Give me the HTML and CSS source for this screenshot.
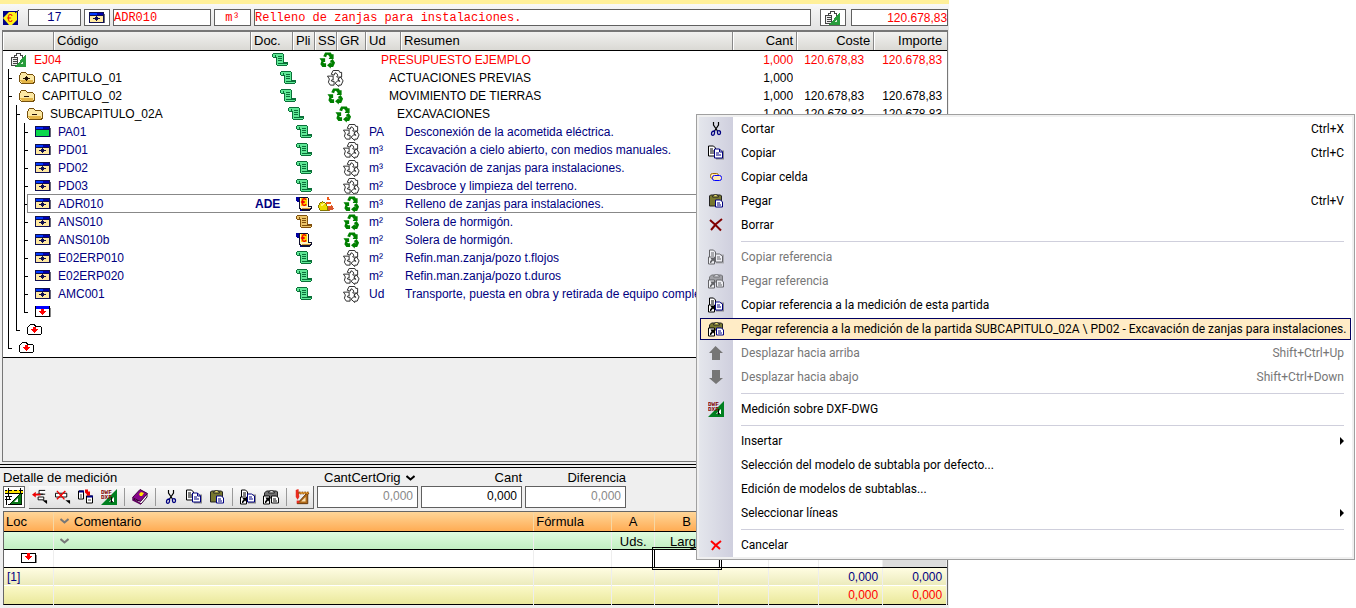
FILE: index.html
```html
<!DOCTYPE html>
<html lang="es">
<head>
<meta charset="utf-8">
<title>Presupuesto ejemplo</title>
<link rel="stylesheet" href="styles.css">
</head>
<body>
<svg class="sprite" aria-hidden="true">
  <symbol id="win" viewBox="0 0 16 12"><path fill="#667" d="M2 11h14V2h-1v9z"/><path fill="#101050" d="M0 0h15v11H0z"/><path fill="#0038ff" d="M1 1h9v2H1z"/><path fill="#0000b0" d="M8 1h6v2H8z"/><path fill="#ffe9a0" d="M1 4h13v6H1z"/><path fill="#101050" d="M7 4h1v1h1v1h2v1H9v1H8v1H7V8H6V7H4V6h2V5h1z"/></symbol>
  <symbol id="wing" viewBox="0 0 16 12"><path fill="#667" d="M2 11h14V2h-1v9z"/><path fill="#101050" d="M0 0h15v11H0z"/><path fill="#0028ff" d="M1 1h9v2H1z"/><path fill="#0000b0" d="M8 1h6v2H8z"/><path fill="#0bd84c" d="M1 4h13v6H1z"/></symbol>
  <symbol id="winr" viewBox="0 0 16 12"><path fill="#888" d="M2 11h14V2h-1v9z"/><path d="M0 0h15v11H0z"/><path fill="#00f" d="M1 0h13v3H1z"/><path fill="#fff" d="M1 3h13v7H1z"/><path fill="red" d="M6 3h3v2h2v1h-1v1H9v1H8v1H7V8H6V7H5V6H4V5h2z"/></symbol>
  <symbol id="boxr" viewBox="0 0 16 12"><path fill="#888" d="M2 10h14V2h-1v8z"/><path d="M0 0h15v10H0z"/><path fill="#fff" d="M1 1h13v8H1z"/><path fill="red" d="M6 0h3v3h2v1h-1v1H9v1H8v1H7V6H6V5H5V4H4V3h2z"/></symbol>
  <symbol id="folp" viewBox="0 0 16 12"><path fill="#fce9a4" stroke="#76500c" d="M.5 3.500l2-3h4l2 2h5l2 2v5l-1 2H2.500l-2-2z"/><path fill="#e4b648" d="M1 8h13v3H3z"/><path fill="#201004" d="M7 4h1v1h1v1h2v1H9v1H8v1H7V8H6V7H4V6h2V5h1z"/></symbol>
  <symbol id="folm" viewBox="0 0 16 12"><path fill="#fce9a4" stroke="#76500c" d="M.5 3.500l2-3h4l2 2h5l2 2v5l-1 2H2.500l-2-2z"/><path fill="#e4b648" d="M1 8h13v3H3z"/><path fill="#201004" d="M5 6h5v1H5z"/></symbol>
  <symbol id="folr" viewBox="0 0 16 12"><path fill="#fff" stroke="#000" d="M.5 3.500l2-2 1-1h4l1 2h5l1 1v6l-1 1h-12l-1-1z"/><path fill="red" d="M6 3h3v2h2v1h-1v1H9v1H8v1H7V8H6V7H5V6H4V5h2z"/></symbol>
  <symbol id="scroll" viewBox="0 0 16 14"><path fill="currentColor" stroke="var(--edge)" d="M1.500.5h9l1 1v8h4v2l-1 1h-9l-1.500-1.500V4.500H1.500l-1-1v-2z"/><path fill="none" stroke="var(--edge)" d="M3.500 4V2M6 3.500h4M6 5.500h4M6 7.500h4M6 10.500h9"/></symbol>
  <symbol id="scrolle" viewBox="0 0 16 14"><path fill="#0000a0" d="M0 0h4v5H1L0 4zM4 9h2v5H4z"/><path fill="#fff4c0" stroke="#101030" d="M3.500.500h8l1 1v8h2.500v2l-1 1h-9l-1.500-1.500z"/><path fill="#101030" d="M6 13h8v1H6z"/><path fill="#ffd800" d="M5 1h6v8H5z"/><text class="euro" x="5" y="9" font-size="10">€</text><path fill="#d49a38" d="M6 11h8v1H6z"/></symbol>
  <symbol id="rec" viewBox="-.5 -.5 18 18"><path d="M4 4l2-4h6l1 2h2v5h-5V6l1-1-1.500-2L8 2.500 7 5zM0 6h6v4H4.500L4 11l1 .5h2v4H3L1 12.500 2 9zM11 9l3-2 2.500 4-2 4.500H12V17l-4-3.500L12 10v1.500h1z"/></symbol>
  <symbol id="helmet" viewBox="0 0 16 14"><path fill="#f25a18" d="M9 0h2l3 10-6 1z"/><path fill="#fff" d="M8 3h4v2H8zm0 4h5v2H8z"/><path fill="#d8542c" d="M8 11l7-2 1 3-5 2z"/><path fill="#ecdc00" stroke="#847600" d="M1 11c-1-6 5-9 8-2l1 4H2z"/><path fill="#fff37a" d="M3 7l4-1-3 4z"/></symbol>
  <symbol id="calc" viewBox="0 0 16 14"><path fill="#fff" stroke="#444" d="M3.500 2.500h2v-2h4v2h2v8h-8z"/><path fill="#eee" stroke="#444" d="M.5 4.500h6v8h-6z"/><path stroke="#444" d="M2 6.500h4M2 8.500h4M2 10.500h4"/><path fill="#289c3c" d="M15 1v13H4z"/><path fill="#d6f0d6" d="M12 8v3H9z"/></symbol>
  <symbol id="cut" viewBox="0 0 16 16"><path fill="none" stroke="#000" stroke-width="1.200" d="M5.500 1v3l4 6M10.500 1v3l-4 6"/><path fill="none" stroke="#000080" stroke-width="1.300" d="M6.500 10c-3 0-3 2-3 3 0 2 3 2 3-1zm3 0c3-1 3 1 3 2 0 2-3 2-3 0z"/></symbol>
  <symbol id="copy" viewBox="0 0 16 15"><path fill="#888" d="M8 5h8v9H8z"/><path fill="#fff" stroke="#000" d="M.5.5h5l2 2v8h-7z"/><path stroke="#000" d="M2 3.500h3M2 5.500h4M2 7.500h4"/><path fill="#fff" stroke="#000080" d="M6.500 3.500h5l3 3v6h-8z"/><path fill="none" stroke="#000080" d="M11.500 3.500v3h3M8 7.500h3M8 9.500h5"/></symbol>
  <symbol id="cell" viewBox="0 0 16 16"><rect x="2.500" y="4.500" width="8" height="5" rx="2" fill="#ffe9b8" stroke="#a06800"/><rect x="4.500" y="6.500" width="9" height="5" rx="2" fill="#ffe9b8" stroke="#00f"/></symbol>
  <symbol id="paste" viewBox="0 0 16 15"><path fill="#77772f" stroke="#222" d="M1.500 2.500l1-1h10l1 1v10h-12z"/><path fill="#eee36b" stroke="#222" d="M4.500 3.500l1-2h1l1-1 1 1h1l1 2z"/><path fill="#fff" stroke="#000080" d="M7.500 6.500h5l2 2v5h-7z"/><path stroke="#000080" d="M9 9.500h3M9 11.500h4"/></symbol>
  <symbol id="rcopy" viewBox="0 0 16 15"><path fill="#888" d="M8 5h8v9H8z"/><path fill="#fff" stroke="#000" d="M1.500.5h4l2 2v8h-6z"/><path stroke="#000" d="M3 3.500h3M3 5.500h3"/><path fill="#fff" stroke="#000080" d="M7.500 4.500h4l3 2v6h-7z"/><path stroke="#000080" d="M9 7.500h3M9 9.500h4"/><path fill="#fff" stroke="#000" d="M.5 7.500h6v7h-6z"/><path d="M2.500 8.500H6V12l-1-1-2 2.500H2V12l1.500-2z"/></symbol>
  <symbol id="rpaste" viewBox="0 0 16 15"><path fill="#77772f" stroke="#222" d="M1.500 3.500l2-2h10l1 1v6h-13z"/><path fill="#eee36b" stroke="#222" d="M5.500 3.500l1-2h1l1-1 1 1h1l1 2z"/><path fill="#fff" stroke="#000080" d="M8.500 6.500h5l2 2v5h-7z"/><path stroke="#000080" d="M10 9.500h3M10 11.500h4"/><path fill="#fff" stroke="#000" d="M.5 6.500h6v8h-6z"/><path d="M2.500 8H6v4l-1-1-2 2.500H2V12l1.500-2z"/></symbol>
  <symbol id="del" viewBox="0 0 16 16"><path fill="none" stroke="#800000" stroke-width="2" d="M2 3l5 4.500 6 6M14 2 8 7l-5 6"/></symbol>
  <symbol id="cancel" viewBox="0 0 16 16"><path fill="none" stroke="#f00" stroke-width="2" d="M3 4l9 8M13 4 8 8l-4 5"/></symbol>
  <symbol id="up" viewBox="0 0 16 16"><path fill="#767676" d="M7.500 1 15 8h-3v7H4V8H1z"/></symbol>
  <symbol id="down" viewBox="0 0 16 16"><path fill="#767676" d="M8 15l7-6h-3V1H4v8H1z"/></symbol>
  <symbol id="dxf" viewBox="0 0 16 16"><path fill="#008020" d="M16 0v16H0z"/><path fill="#fff" d="M13 8v5H8z"/><path fill="#000" d="M10 8h1v4h1l-1 2-2-2h1z"/><text class="dxf" x="0" y="5" font-size="6">DWF</text><text class="dxf" x="0" y="10" font-size="6">DXF</text></symbol>
  <symbol id="measure" viewBox="0 0 18 18"><path fill="#087818" stroke="#002800" d="M16.500 4.500v12H4.500z"/><path fill="#fff" d="M13 10v4H9z"/><path fill="#ffe400" d="M0 2h18v3H0z"/><path stroke="#000" d="M0 5.500h18M0 2.500h2M4 2.500h3M9 2.500h3M14 2.500h4M3.500 0v9M15.500 0v6M0 8.500h7M0 11.500h6M1.500 9v8M4.500 9v3M3 16.500h14"/></symbol>
  <symbol id="tri" viewBox="0 0 18 18"><path fill="#b06a18" stroke="#5a2c00" d="M15.500 3.500v13H3.500z"/><path fill="#fce0b0" d="M13 9v5H8z"/><path fill="#e82c20" d="M2 1l3-1 1 9-2 3-2-3z"/><path fill="#e82c20" d="M3 13h3v3H3z"/><path fill="#f4ac30" stroke="#803800" stroke-dasharray="2 1" d="M5.500 3.500h11v2h-11z"/></symbol>
  <symbol id="ins" viewBox="0 0 17 15"><path fill="#fff" stroke="#000" d="M14 .500H7.500v4H14M12.500 7.500h-6v3h6zM5 4.500h7"/><path fill="#e00" d="M0 5l4-3v2h5v2H4v2z"/><path d="M11 11h5v4z"/></symbol>
  <symbol id="delrow" viewBox="0 0 17 15"><path fill="#fff" stroke="#000" d="M.5 3.500h12v4H.500z"/><path fill="none" stroke="#e00" stroke-width="1.500" d="M2 1l8 9M11 1 2 10"/><path d="M11 11h5v4z"/></symbol>
  <symbol id="move" viewBox="0 0 16 15"><path fill="#fff" stroke="#000" d="M.5 1.500h5v8h-5zM8.500 6.500h6v7h-6z"/><path fill="#000080" d="M1 1h5v2H1zm8 5h6v2H9z"/><path stroke="#444" d="M2 5.500h2M2 7.500h2M10 10.500h3"/><path fill="#e00" d="M7 0h3v2h2V1v5H8l1-1-2-2z"/></symbol>
  <symbol id="book" viewBox="0 0 16 16"><path fill="#fff" stroke="#300030" d="M1 10l8 5 6-7v-3L7 12z"/><path fill="#87068a" stroke="#400040" d="M.500 8.500 8 .500l7.500 4-7 8z"/><path fill="#ffe400" d="M7 5l2-2 3 1-2 3H8z"/><path fill="none" stroke="#600060" stroke-width="1.500" d="M1 9v2l8 4"/></symbol>
  <symbol id="tag" viewBox="0 0 16 16"><path fill="#000088" d="M0 1h15v14H0z"/><path fill="#fff21a" d="M0 8 6 2h8v8l-5 5H6z"/><path stroke="#222" d="M12 3l4-3"/><text class="euro thin" x="4" y="12" font-size="10">€</text></symbol>
  <symbol id="chev" viewBox="0 0 9 6"><path fill="none" stroke="currentColor" stroke-width="2" d="M.500 1l4 3.500 4-3.500"/></symbol>
</svg>

<main class="app">
  <header class="record">
    <svg class="tag"><use href="#tag"/></svg>
    <input class="mono nav" aria-label="Fila" value="17">
    <button class="box" aria-label="Tipo"><svg class="i12"><use href="#win"/></svg></button>
    <input class="mono code" aria-label="Código" value="ADR010">
    <input class="mono unit" aria-label="Unidad" value="m³">
    <input class="mono grow" aria-label="Resumen" value="Relleno de zanjas para instalaciones.">
    <button class="box calc" aria-label="Calcular"><svg class="i14"><use href="#calc"/></svg></button>
    <input class="total" aria-label="Importe" value="120.678,83">
  </header>

  <section class="list">
    <table class="tree">
      <thead><tr><th></th><th>Código</th><th>Doc.</th><th>Pli</th><th>SS</th><th>GR</th><th>Ud</th><th>Resumen</th><th class="r">Cant</th><th class="r">Coste</th><th class="r">Importe</th></tr></thead>
      <tbody>
        <tr class="l0 red"><td><svg class="i14"><use href="#calc"/></svg>EJ04</td><td></td><td><svg class="i14 green"><use href="#scroll"/></svg></td><td></td><td><svg class="rec on"><use href="#rec"/></svg></td><td></td><td>PRESUPUESTO EJEMPLO</td><td>1,000</td><td>120.678,83</td><td>120.678,83</td></tr>
        <tr class="l1"><td><i class="t"></i><svg class="i12"><use href="#folp"/></svg>CAPITULO_01</td><td></td><td><svg class="i14 green"><use href="#scroll"/></svg></td><td></td><td><svg class="rec"><use href="#rec"/></svg></td><td></td><td>ACTUACIONES PREVIAS</td><td>1,000</td><td></td><td></td></tr>
        <tr class="l1"><td><i class="t"></i><svg class="i12"><use href="#folm"/></svg>CAPITULO_02</td><td></td><td><svg class="i14 green"><use href="#scroll"/></svg></td><td></td><td><svg class="rec on"><use href="#rec"/></svg></td><td></td><td>MOVIMIENTO DE TIERRAS</td><td>1,000</td><td>120.678,83</td><td>120.678,83</td></tr>
        <tr class="l2"><td><i></i><i class="t"></i><svg class="i12"><use href="#folm"/></svg>SUBCAPITULO_02A</td><td></td><td><svg class="i14 green"><use href="#scroll"/></svg></td><td></td><td><svg class="rec on"><use href="#rec"/></svg></td><td></td><td>EXCAVACIONES</td><td>1,000</td><td>120.678,83</td><td>120.678,83</td></tr>
        <tr class="l3"><td><i></i><i></i><i class="t"></i><svg class="i12"><use href="#wing"/></svg>PA01</td><td></td><td><svg class="i14 green"><use href="#scroll"/></svg></td><td></td><td><svg class="rec"><use href="#rec"/></svg></td><td>PA</td><td>Desconexión de la acometida eléctrica.</td></tr>
        <tr class="l3"><td><i></i><i></i><i class="t"></i><svg class="i12"><use href="#win"/></svg>PD01</td><td></td><td><svg class="i14 green"><use href="#scroll"/></svg></td><td></td><td><svg class="rec"><use href="#rec"/></svg></td><td>m³</td><td>Excavación a cielo abierto, con medios manuales.</td></tr>
        <tr class="l3"><td><i></i><i></i><i class="t"></i><svg class="i12"><use href="#win"/></svg>PD02</td><td></td><td><svg class="i14 green"><use href="#scroll"/></svg></td><td></td><td><svg class="rec"><use href="#rec"/></svg></td><td>m³</td><td>Excavación de zanjas para instalaciones.</td></tr>
        <tr class="l3"><td><i></i><i></i><i class="t"></i><svg class="i12"><use href="#win"/></svg>PD03</td><td></td><td><svg class="i14 green"><use href="#scroll"/></svg></td><td></td><td><svg class="rec"><use href="#rec"/></svg></td><td>m²</td><td>Desbroce y limpieza del terreno.</td></tr>
        <tr class="l3 current"><td><i></i><i></i><i class="t"></i><svg class="i12"><use href="#win"/></svg>ADR010</td><td>ADE</td><td><svg class="i14"><use href="#scrolle"/></svg></td><td><svg class="i14"><use href="#helmet"/></svg></td><td><svg class="rec on"><use href="#rec"/></svg></td><td>m³</td><td>Relleno de zanjas para instalaciones.</td></tr>
        <tr class="l3"><td><i></i><i></i><i class="t"></i><svg class="i12"><use href="#win"/></svg>ANS010</td><td></td><td><svg class="i14 tan"><use href="#scroll"/></svg></td><td></td><td><svg class="rec on"><use href="#rec"/></svg></td><td>m²</td><td>Solera de hormigón.</td></tr>
        <tr class="l3"><td><i></i><i></i><i class="t"></i><svg class="i12"><use href="#win"/></svg>ANS010b</td><td></td><td><svg class="i14"><use href="#scrolle"/></svg></td><td></td><td><svg class="rec on"><use href="#rec"/></svg></td><td>m²</td><td>Solera de hormigón.</td></tr>
        <tr class="l3"><td><i></i><i></i><i class="t"></i><svg class="i12"><use href="#win"/></svg>E02ERP010</td><td></td><td><svg class="i14 green"><use href="#scroll"/></svg></td><td></td><td><svg class="rec"><use href="#rec"/></svg></td><td>m²</td><td>Refin.man.zanja/pozo t.flojos</td></tr>
        <tr class="l3"><td><i></i><i></i><i class="t"></i><svg class="i12"><use href="#win"/></svg>E02ERP020</td><td></td><td><svg class="i14 green"><use href="#scroll"/></svg></td><td></td><td><svg class="rec"><use href="#rec"/></svg></td><td>m²</td><td>Refin.man.zanja/pozo t.duros</td></tr>
        <tr class="l3"><td><i></i><i></i><i class="t"></i><svg class="i12"><use href="#win"/></svg>AMC001</td><td></td><td><svg class="i14 green"><use href="#scroll"/></svg></td><td></td><td><svg class="rec"><use href="#rec"/></svg></td><td>Ud</td><td>Transporte, puesta en obra y retirada de equipo completo</td></tr>
        <tr class="l3"><td><i></i><i></i><i class="e"></i><svg class="i12"><use href="#winr"/></svg></td></tr>
        <tr class="l2"><td><i></i><i class="e"></i><svg class="i12"><use href="#folr"/></svg></td></tr>
        <tr class="l1"><td><i class="e"></i><svg class="i12"><use href="#folr"/></svg></td></tr>
      </tbody>
    </table>
  </section>

  <section class="detail">
    <div class="tools">
      <div class="left">
        <h2>Detalle de medición</h2>
        <div class="bars">
          <button class="pressed" aria-label="Medición"><svg class="i18"><use href="#measure"/></svg></button>
          <div class="bar">
            <button aria-label="Insertar línea"><svg class="i16"><use href="#ins"/></svg></button>
            <button aria-label="Borrar línea"><svg class="i16"><use href="#delrow"/></svg></button>
            <button aria-label="Mover"><svg class="i16"><use href="#move"/></svg></button>
            <button aria-label="DXF-DWG"><svg class="i16"><use href="#dxf"/></svg></button>
            <hr>
            <button aria-label="Ayuda"><svg class="i16"><use href="#book"/></svg></button>
            <hr>
            <button aria-label="Cortar"><svg class="i16"><use href="#cut"/></svg></button>
            <button aria-label="Copiar"><svg class="i16"><use href="#copy"/></svg></button>
            <button aria-label="Pegar"><svg class="i16"><use href="#paste"/></svg></button>
            <hr>
            <button aria-label="Copiar referencia"><svg class="i16"><use href="#rcopy"/></svg></button>
            <button aria-label="Pegar referencia"><svg class="i16 gray"><use href="#rpaste"/></svg></button>
            <hr>
            <button aria-label="Modelo"><svg class="i16"><use href="#tri"/></svg></button>
          </div>
        </div>
      </div>
      <div class="amount"><div class="pick"><select aria-label="Columna"><option>CantCertOrig</option></select><svg class="chev"><use href="#chev"/></svg></div><input class="off" aria-label="CantCertOrig" value="0,000"></div>
      <div class="amount"><label for="cant">Cant</label><input id="cant" value="0,000"></div>
      <div class="amount"><label for="dif">Diferencia</label><input id="dif" class="off" value="0,000"></div>
    </div>
    <table class="lines">
      <thead>
        <tr class="orange"><th>Loc</th><th><svg class="chev dim"><use href="#chev"/></svg>Comentario</th><th>Fórmula</th><th class="c">A</th><th class="c">B</th><th></th><th></th><th></th><th></th></tr>
        <tr class="mint"><th></th><th><svg class="chev dim"><use href="#chev"/></svg></th><th></th><th class="c">Uds.</th><th class="c">Largo</th><th></th><th></th><th></th><th></th></tr>
      </thead>
      <tbody>
        <tr class="edit"><td class="c"><svg class="i12"><use href="#boxr"/></svg></td><td></td><td></td><td></td><td class="focus"></td><td></td><td></td><td></td><td class="lock"></td></tr>
        <tr class="sum blue"><td>[1]</td><td></td><td></td><td></td><td></td><td></td><td></td><td class="r">0,000</td><td class="r">0,000</td></tr>
        <tr class="sum deep"><td></td><td></td><td></td><td></td><td></td><td></td><td></td><td class="r">0,000</td><td class="r">0,000</td></tr>
      </tbody>
    </table>
  </section>
</main>

<div class="menu" role="menu">
  <button role="menuitem"><svg class="i16"><use href="#cut"/></svg><span>Cortar</span><kbd>Ctrl+X</kbd></button>
  <button role="menuitem"><svg class="i16"><use href="#copy"/></svg><span>Copiar</span><kbd>Ctrl+C</kbd></button>
  <button role="menuitem"><svg class="i16"><use href="#cell"/></svg><span>Copiar celda</span></button>
  <button role="menuitem"><svg class="i16"><use href="#paste"/></svg><span>Pegar</span><kbd>Ctrl+V</kbd></button>
  <button role="menuitem"><svg class="i16"><use href="#del"/></svg><span>Borrar</span></button>
  <hr>
  <button role="menuitem" disabled><svg class="i16"><use href="#rcopy"/></svg><span>Copiar referencia</span></button>
  <button role="menuitem" disabled><svg class="i16"><use href="#rpaste"/></svg><span>Pegar referencia</span></button>
  <button role="menuitem"><svg class="i16"><use href="#rcopy"/></svg><span>Copiar referencia a la medición de esta partida</span></button>
  <button role="menuitem" class="hot"><svg class="i16"><use href="#rpaste"/></svg><span>Pegar referencia a la medición de la partida SUBCAPITULO_02A \ PD02 - Excavación de zanjas para instalaciones.</span></button>
  <button role="menuitem" disabled><svg class="i16 keep"><use href="#up"/></svg><span>Desplazar hacia arriba</span><kbd>Shift+Ctrl+Up</kbd></button>
  <button role="menuitem" disabled><svg class="i16 keep"><use href="#down"/></svg><span>Desplazar hacia abajo</span><kbd>Shift+Ctrl+Down</kbd></button>
  <hr>
  <button role="menuitem"><svg class="i16"><use href="#dxf"/></svg><span>Medición sobre DXF-DWG</span></button>
  <hr>
  <button role="menuitem" class="sub"><span>Insertar</span></button>
  <button role="menuitem"><span>Selección del modelo de subtabla por defecto...</span></button>
  <button role="menuitem"><span>Edición de modelos de subtablas...</span></button>
  <button role="menuitem" class="sub"><span>Seleccionar líneas</span></button>
  <hr>
  <button role="menuitem"><svg class="i16"><use href="#cancel"/></svg><span>Cancelar</span></button>
</div>
</body>
</html>
```

FILE: styles.css
```css
* { box-sizing: border-box; }
body { margin: 0; background: #fff; color: #000; font: 12px/18px "Liberation Sans", Arial, sans-serif; overflow: hidden; }
button, input, select { font: inherit; color: inherit; margin: 0; padding: 0; border: 0; border-radius: 0; background: none; }
table { border-spacing: 0; }
th { font-weight: 400; text-align: left; }
th, td { padding: 0; }
svg { display: block; flex: none; }
.sprite { display: none; }
.i12 { width: 16px; height: 12px; shape-rendering: crispEdges; }
.i14 { width: 16px; height: 14px; shape-rendering: crispEdges; }
.i16 { width: 16px; height: 16px; }
.i18 { width: 18px; height: 18px; }
.euro { fill: #e00; font-family: "Liberation Sans", sans-serif; font-weight: 700; }
.thin { font-weight: 400; }
.dxf { fill: #800000; font-family: "Liberation Mono", monospace; font-weight: 700; }

.app { display: flex; flex-direction: column; width: 70vw; min-height: 100vh; background: #efefef; border-top: 4px solid #fff09a; }

/* current record */
.record { display: flex; align-items: center; gap: 3px; height: 26px; padding: 1px 1px 0 3px; background: linear-gradient(#f8f8f8, #e2e2e2); }
.record input, .record .box { height: 17px; border: 1px solid #606060; background: #fff; color: #f00; min-width: 0; }
.record input { padding-top: 1px; }
.tag { width: 16px; height: 16px; margin-right: 6px; }
.mono { font-family: "Liberation Mono", "Courier New", monospace; }
.record .nav { width: 53px; color: #000080; text-align: center; }
.record .box { width: 26px; display: flex; align-items: center; justify-content: center; }
.record .code { width: 98px; }
.record .unit { width: 37px; text-align: center; }
.record .grow { flex: 1; }
.record .calc { margin: 0 2px 0 6px; }
.record .total { width: 97px; text-align: right; }

/* budget tree */
.list { flex: 1; margin: 0 1px 2px 2px; border: 1px solid #777; border-top: 2px solid #777; }
.tree { display: block; background: #fff; border-bottom: 1px solid #000; color: #000080; }
.tree thead, .tree tbody { display: block; }
.tree tr { display: grid; height: 18px; }
.tree thead tr { height: 19px; grid-template-columns: 51px 197px 42px 22px 22px 29px 35px 1fr 64px 77px 73px; background: linear-gradient(#f1f1ef, #dad9d4); border-bottom: 1px solid #000; color: #000; font-size: 13px; }
.tree th { padding-left: 2px; border-right: 1px solid #888; border-left: 1px solid #fff; white-space: nowrap; }
.tree th.r { text-align: right; padding-right: 3px; }
.tree th:last-child { border-right: 0; padding-right: 5px; }
.tree tbody tr { position: relative; grid-template-columns: 252px calc(17px + var(--in)) 22px 25px 26px 36px 1fr 70px 71px 78px; padding-right: 5px; align-items: center; }
.l0 { --in: 0px; }
.l1 { --in: 8px; }
.l2 { --in: 16px; }
.l3 { --in: 24px; }
.l0, .l1, .l2 { color: #000; }
.tree .red { color: #f00; }
.tree td { white-space: nowrap; overflow: hidden; }
.tree td:first-child { display: flex; align-items: center; height: 18px; padding-left: 5px; }
.tree td:first-child svg { margin: 0 7px 0 3px; }
.tree td:nth-child(2) { font-weight: 700; }
.tree td:nth-child(n+8) { text-align: right; }
.tree i { width: 8px; height: 18px; background: linear-gradient(#000, #000) 0 0 / 1px 100% no-repeat; }
.tree i.t { background: linear-gradient(#000, #000) 0 0 / 1px 100% no-repeat, linear-gradient(#000, #000) 0 9px / 4px 1px no-repeat; }
.tree i.e { background: linear-gradient(#000, #000) 0 0 / 1px 10px no-repeat, linear-gradient(#000, #000) 0 9px / 4px 1px no-repeat; }
.current::after { content: ""; position: absolute; inset: -1px 0 0 24px; border: 1px solid #888; border-right: 0; }
.green { color: #5fe896; --edge: #0a7038; }
.tan { color: #ecc468; --edge: #80500c; }
.rec { width: 17px; height: 17px; fill: #fff; stroke: #222; stroke-width: 1; }
.rec.on { fill: #008000; stroke: none; }

/* measurement detail */
.detail { border-top: 1px solid #000; box-shadow: inset 0 2px #efefef, inset 0 3px #000; padding: 4px 1px 3px 3px; }
.tools { display: flex; gap: 3px; font-size: 12px; }
.tools h2, .tools label, .pick { display: block; margin: 0; height: 17px; font-size: 13px; font-weight: 400; line-height: 17px; }
.bars { display: flex; gap: 4px; height: 23px; }
.bars button { display: flex; align-items: center; justify-content: center; }
.pressed { width: 22px; height: 22px; border: 1px solid #666; background: #fff; }
.bar { display: flex; align-items: center; gap: 7px; padding: 0 3px; background: linear-gradient(#fafafa, #e0e0e0); border-right: 1px solid #666; border-bottom: 1px solid #666; }
.bar hr { width: 1px; height: 18px; margin: 0; border: 0; background: #999; }
.amount { width: 101px; text-align: right; }
.amount input { display: block; width: 100%; height: 22px; padding: 0 4px 2px 0; border: 1px solid #606060; background: #fff; text-align: right; }
.amount .off { color: #888; }
.pick { display: flex; align-items: center; justify-content: flex-end; gap: 5px; padding-right: 3px; }
.pick select { appearance: none; }
.chev { width: 9px; height: 6px; }
.dim { display: inline-block; color: #777; margin: 0 5px 2px 3px; }

.lines { display: block; margin-top: 2px; border: 1px solid #666; border-bottom: 1px solid #000; }
.lines thead, .lines tbody { display: block; }
.lines tr { display: grid; grid-template-columns: 50px 1fr 78px 43px 64px 50px 50px 64px 64px; height: 18px; }
.lines th, .lines td { padding-left: 3px; border-right: 1px solid #eee; white-space: nowrap; line-height: 19px; }
.lines th { font-size: 13px; }
.lines th:nth-child(3), .lines th:first-child { padding-left: 2px; }
.lines .c { display: flex; align-items: center; justify-content: center; padding: 0; }
.lines .r { padding-right: 4px; text-align: right; }
.lines .orange { height: 20px; background: linear-gradient(#ffd698, #ffac54); border-bottom: 1px solid #000; }
.orange th { border-color: #f6d7a4; }
.lines .mint { background: linear-gradient(#e0fce0, #c2efc2); border-bottom: 1px solid #000; }
.lines .edit { background: #fff; border-bottom: 1px solid #000; }
.edit .focus { outline: 3px double #000; background: #fff; z-index: 1; }
.edit .lock { background: #ddd; }
.sum { background: linear-gradient(#fffde2, #ecebbc); border-bottom: 1px solid #fff; }
.sum.blue { color: #000080; }
.sum.deep { background: linear-gradient(#fbf9c8, #eae89c); border: 0; color: #f00; }

/* context menu */
.menu { position: absolute; z-index: 2; left: 696px; right: 1px; top: 114px; display: flex; flex-direction: column; padding: 2px; border: 1px solid #a0a0a0; background: linear-gradient(90deg, #e4e6ec, #cfcfde) 0 0 / 34px 100% no-repeat content-box, #fff; box-shadow: inset 0 0 0 2px #f0f0f0; font: 12px/20px Roboto, "Segoe UI", sans-serif; }
.menu button { display: grid; grid-template-columns: 33px 1fr auto; align-items: center; height: 22px; margin: 1px; padding-right: 6px; border: 1px solid transparent; text-align: left; white-space: nowrap; }
.menu svg { margin-left: 7px; }
.menu span { grid-column: 2; padding-left: 7px; }
.menu kbd { font: inherit; }
.menu button:disabled { color: #777; }
.menu button:disabled svg:not(.keep) { filter: grayscale(1) opacity(.55); }
.menu .hot { border-color: #000060; background: #ffecc6; }
.menu hr { height: 1px; margin: 4px 8px 3px 42px; border: 0; background: #cfcfdc; }
.sub::after { content: ""; grid-column: 3; border: 4px solid transparent; border-left-color: #000; border-right: 0; }
.gray { filter: grayscale(1); }
```
